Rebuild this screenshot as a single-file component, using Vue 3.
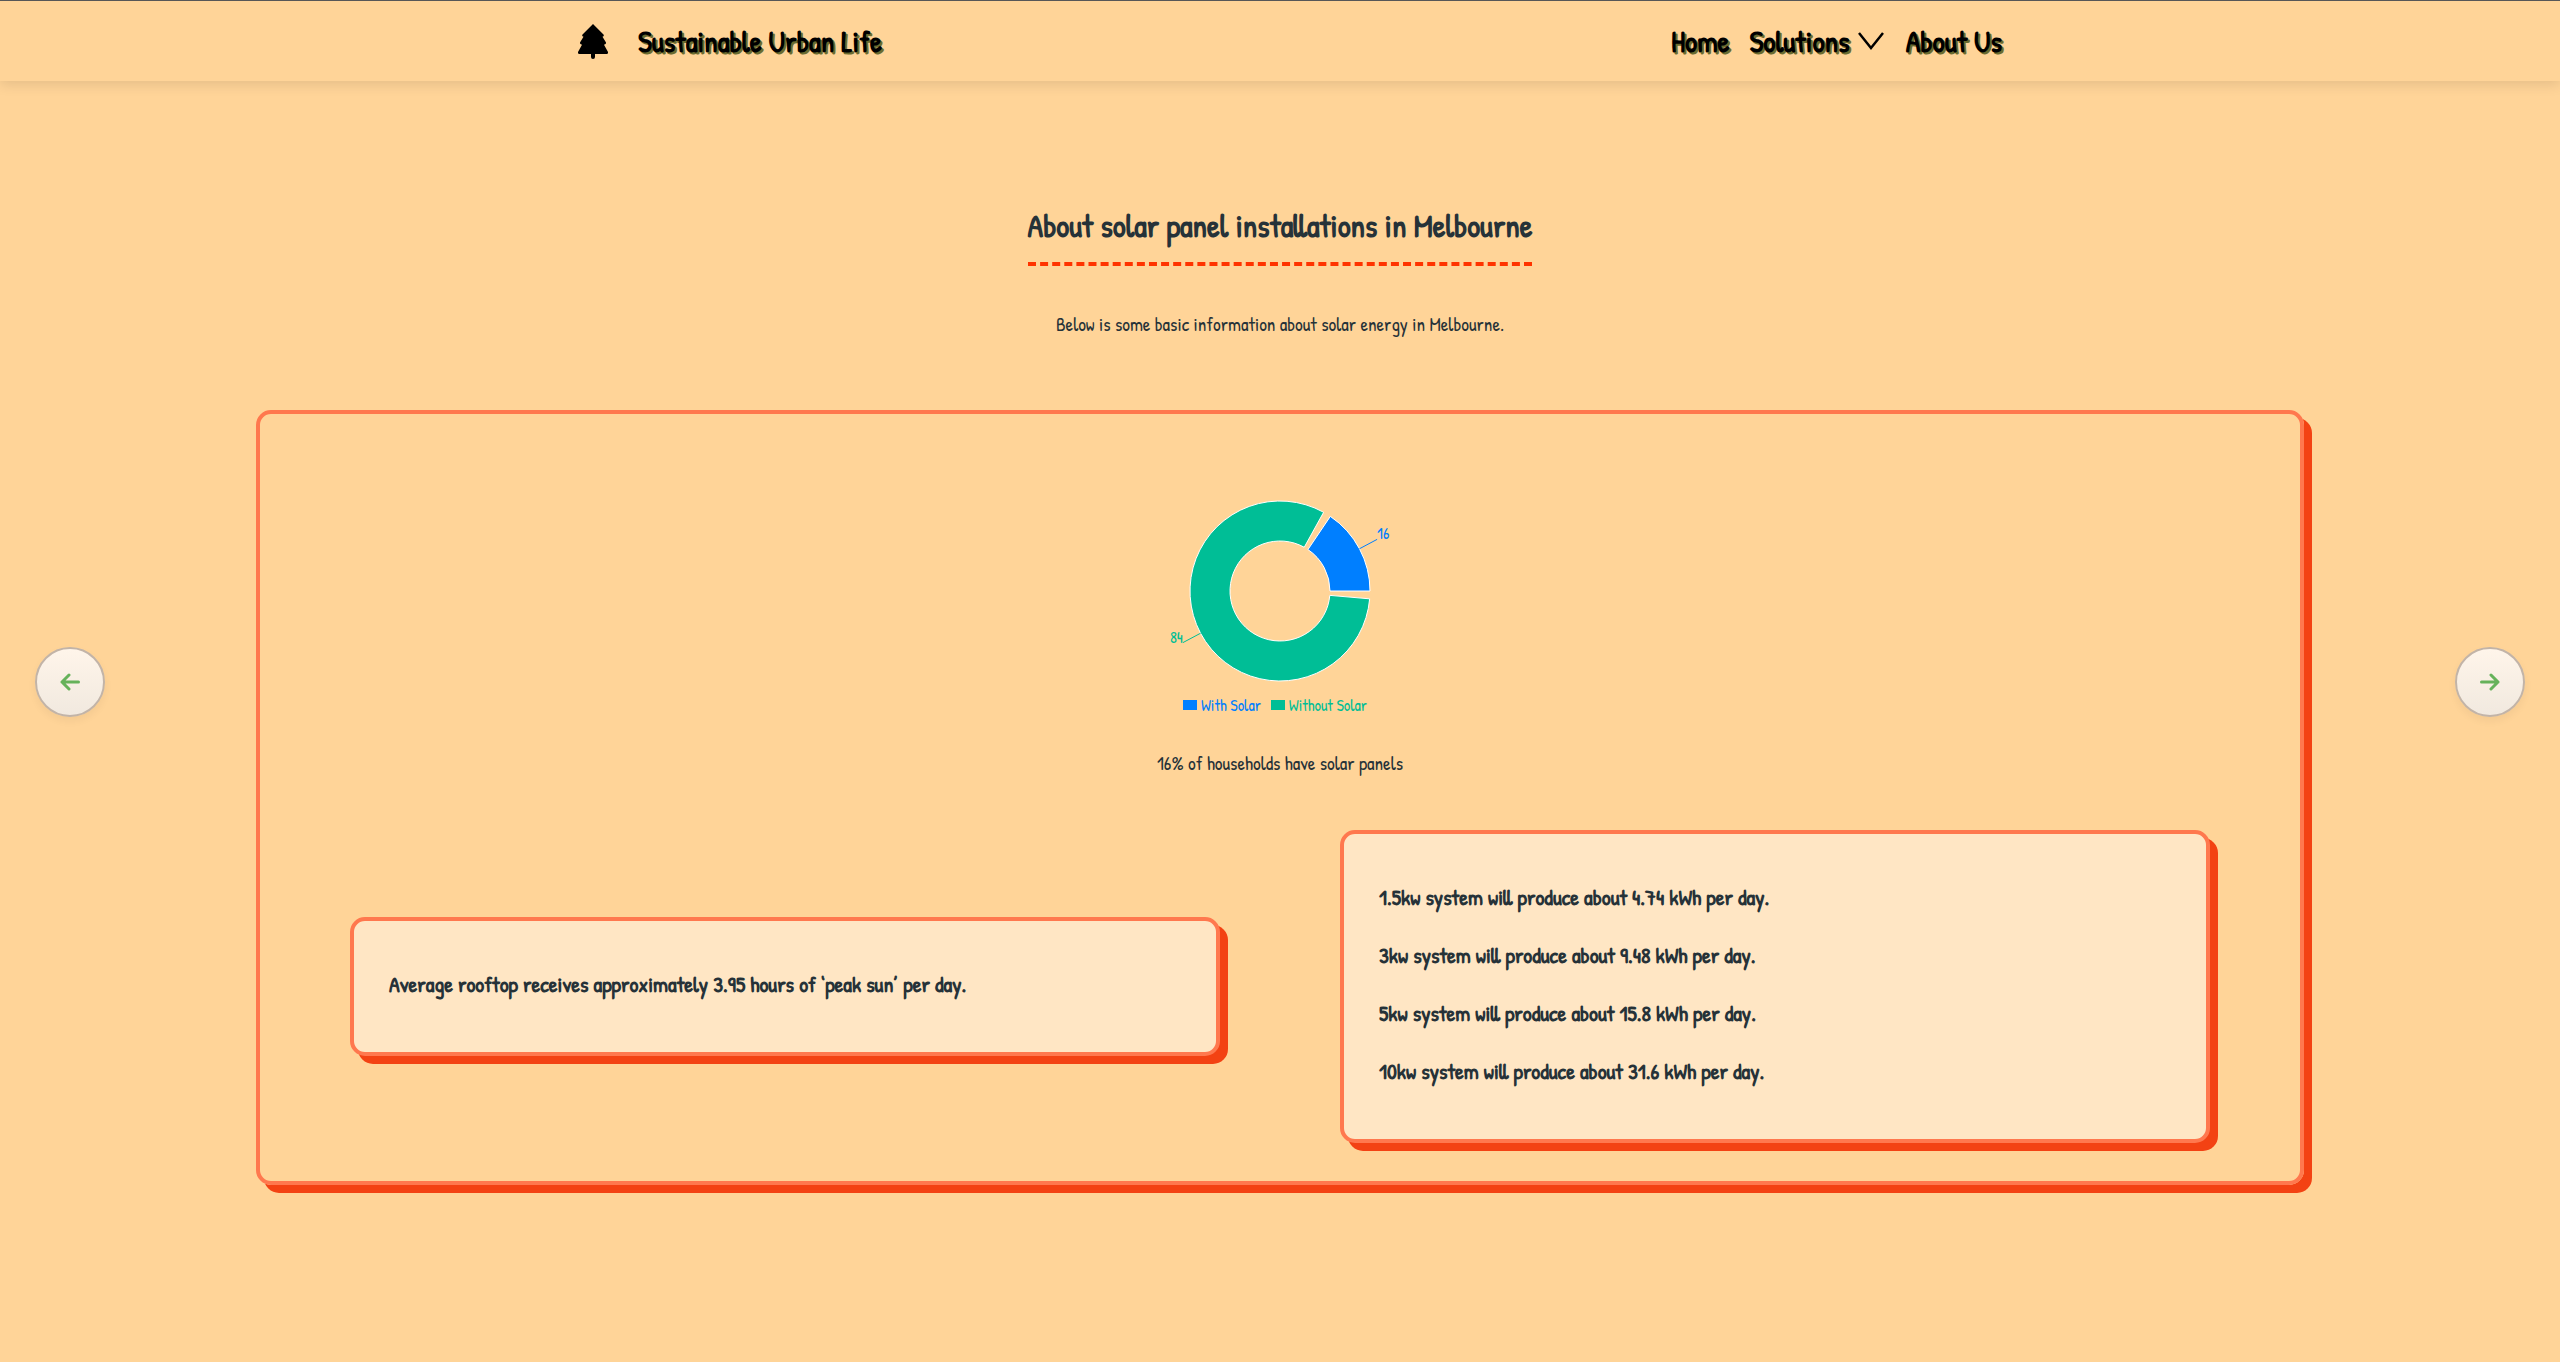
<script setup>
const total = 84 + 16
const padAngle = 5
const centre = { x: 150, y: 110 }
const outer = 90
const inner = 50
const sources = [
  { name: 'With Solar', value: 16, color: '#007fff' },
  { name: 'Without Solar', value: 84, color: '#00be96' },
]

function point(radius, degrees) {
  const a = (degrees * Math.PI) / 180
  return {
    x: Number((centre.x + radius * Math.cos(a)).toFixed(2)),
    y: Number((centre.y - radius * Math.sin(a)).toFixed(2)),
  }
}

let start = 0
const slices = sources.map((s) => {
  const sweep = ((360 - padAngle * sources.length) * s.value) / total
  const end = start + sweep
  const large = sweep > 180 ? 1 : 0
  const a = point(outer, start)
  const b = point(outer, end)
  const c = point(inner, end)
  const d = point(inner, start)
  const mid = start + sweep / 2
  const slice = {
    ...s,
    path: `M${a.x} ${a.y}A${outer} ${outer} 0 ${large} 0 ${b.x} ${b.y}L${c.x} ${c.y}A${inner} ${inner} 0 ${large} 1 ${d.x} ${d.y}Z`,
    from: point(outer, mid),
    to: point(outer + 20, mid),
  }
  slice.anchor = slice.to.x > centre.x ? 'start' : 'end'
  start = end + padAngle
  return slice
})

const systems = [
  { size: '1.5kw', output: '4.74' },
  { size: '3kw', output: '9.48' },
  { size: '5kw', output: '15.8' },
  { size: '10kw', output: '31.6' },
]
</script>

<template>
  <div class="page">
    <header class="site-header">
      <div class="bar">
        <a class="brand" href="#">
          <svg class="tree" viewBox="0 0 30 35" aria-hidden="true">
            <path d="M15 0L25.500 10.500Q26.500 12.300 24.500 12.800L28 18.500Q28.500 20.300 26 20.800L30 28Q30.500 30 28.500 30H17V33A2 2 0 0 1 13 33V30H1.500Q-.5 30 0 28L4 20.800Q1.500 20.300 2 18.500L5.500 12.800Q3.500 12.300 4.500 10.500Z" />
          </svg>
          <span>Sustainable Urban Life</span>
        </a>
        <nav class="menu">
          <a href="#">Home</a>
          <a href="#" class="drop">Solutions
            <svg class="chevron" viewBox="0 0 28 18" aria-hidden="true"><path d="M1 1L13 16L25 1" /></svg>
          </a>
          <a href="#">About Us</a>
        </nav>
      </div>
    </header>

    <main>
      <h1>About solar panel installations in Melbourne</h1>
      <p class="intro">Below is some basic information about solar energy in Melbourne.</p>

      <section class="panel">
        <figure>
          <svg class="chart" viewBox="0 0 300 210" role="img" aria-label="Households with and without solar">
            <g v-for="s in slices" :key="s.name">
              <path :d="s.path" :fill="s.color" stroke="#fff" />
              <line :x1="s.from.x" :y1="s.from.y" :x2="s.to.x" :y2="s.to.y" :stroke="s.color" />
              <text :x="s.to.x" :y="s.to.y" :text-anchor="s.anchor" :fill="s.color">{{ s.value }}</text>
            </g>
          </svg>
          <ul class="legend">
            <li v-for="s in sources" :key="s.name" :style="{ color: s.color }">{{ s.name }}</li>
          </ul>
          <figcaption>16% of households have solar panels</figcaption>
        </figure>

        <div class="facts">
          <div class="card">
            <p>Average rooftop receives approximately 3.95 hours of ‘peak sun’ per day.</p>
          </div>
          <div class="card">
            <p v-for="s in systems" :key="s.size">{{ s.size }} system will produce about {{ s.output }} kWh per day.</p>
          </div>
        </div>
      </section>
    </main>

    <button class="arrow previous" type="button" aria-label="Previous">
      <svg viewBox="0 0 20 18" aria-hidden="true"><path d="M18.500 9H2M9 2L2 9L9 16" /></svg>
    </button>
    <button class="arrow next" type="button" aria-label="Next">
      <svg viewBox="0 0 20 18" aria-hidden="true"><path d="M1.500 9H18M11 2L18 9L11 16" /></svg>
    </button>
  </div>
</template>

<style>
body {
  margin: 0;
  background: #ffd498;
}
</style>

<style scoped>
.page {
  min-height: 100vh;
  box-sizing: border-box;
  border-top: 1px solid #5a5a5a;
  color: #263238;
  font-family: "Patrick Hand", "Liberation Sans Narrow", "Liberation Sans", sans-serif;
  font-size: 19px;
  line-height: 24px;
}
.site-header {
  box-shadow: 0 4px 12px rgba(0, 0, 0, 0.1);
}
.bar {
  display: flex;
  align-items: center;
  justify-content: space-between;
  max-width: 1424px;
  height: 80px;
  margin: 0 auto;
  padding-left: 20px;
}
.bar a {
  color: #000;
  font-size: 30px;
  font-weight: 700;
  line-height: 32px;
  text-decoration: none;
  text-shadow: 2px 2px #6b6b2f;
}
.brand,
.menu,
.drop {
  display: flex;
  align-items: center;
}
.brand {
  gap: 30px;
}
.tree {
  width: 30px;
  height: 35px;
}
.menu {
  gap: 20px;
}
.drop {
  gap: 8px;
}
.chevron {
  width: 28px;
  height: 18px;
  fill: none;
  stroke: #000;
  stroke-width: 2.5;
}
main {
  display: flex;
  flex-direction: column;
  align-items: center;
  padding: 122px 0 100px;
}
h1 {
  margin: 0;
  padding: 3px 0 16px;
  border-bottom: 4px dashed #ff3300;
  font-size: 32px;
  line-height: 40px;
}
.intro {
  margin: 46px 0 74px;
}
.panel {
  width: 80%;
  box-sizing: border-box;
  padding: 67px 90px 38px;
}
.panel,
.card {
  border: 4px solid #ff784e;
  border-radius: 15px;
  box-shadow: 8px 8px #f34213;
}
figure {
  display: flex;
  flex-direction: column;
  align-items: center;
  margin: 0;
}
.chart {
  width: 300px;
  height: 210px;
  font-size: 16px;
}
.legend {
  display: flex;
  gap: 10px;
  margin: 4px 0 36px;
  padding: 0 10px 0 0;
  list-style: none;
  font-size: 16px;
  line-height: 20px;
}
.legend li {
  display: flex;
  align-items: center;
  gap: 4px;
}
.legend li::before {
  width: 14px;
  height: 10px;
  background: currentColor;
  content: "";
}
.facts {
  display: grid;
  grid-template-columns: 1fr 1fr;
  gap: 120px;
  align-items: center;
  margin-top: 55px;
}
.card {
  display: grid;
  gap: 28px;
  padding: 48px 35px 53px;
  background: #ffe6c4;
}
.card p {
  margin: 0;
  font-size: 22px;
  font-weight: 700;
  line-height: 30px;
}
.arrow {
  position: fixed;
  top: 50%;
  width: 70px;
  height: 70px;
  margin-top: -34px;
  padding: 0;
  border: 2px solid #c2b4a8;
  border-radius: 50%;
  background: linear-gradient(#fff5ea, #f1e9df);
  box-shadow: 0 4px 8px rgba(0, 0, 0, 0.05);
}
.previous {
  left: 35px;
}
.next {
  right: 35px;
}
.arrow svg {
  display: block;
  width: 20px;
  height: 18px;
  margin: auto;
  fill: none;
  stroke: #66b25a;
  stroke-width: 3;
  stroke-linecap: round;
  stroke-linejoin: round;
}
</style>
